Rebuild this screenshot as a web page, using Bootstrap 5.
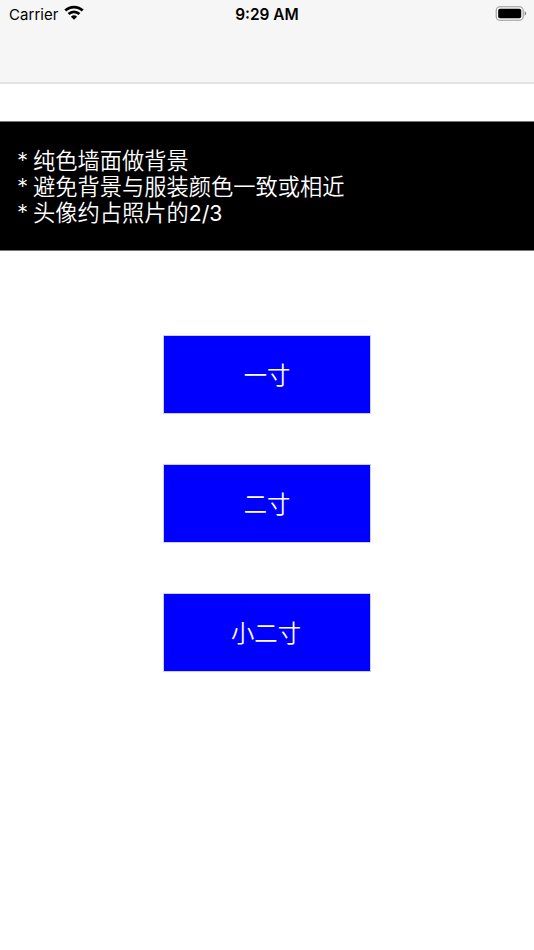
<!DOCTYPE html>
<html lang="zh-CN">
<head>
<meta charset="utf-8">
<meta name="viewport" content="width=device-width, initial-scale=1">
<title>证件照</title>
<link href="https://cdn.jsdelivr.net/npm/bootstrap@5.3.0/dist/css/bootstrap.min.css" rel="stylesheet">
<style>
body{font-family:Inter,"Noto Sans CJK SC",sans-serif;color:#000;height:950px;overflow:hidden}
.top-area{height:84px;background:#f6f6f6;border-bottom:2px solid #e4e4e4}
.status-row{height:28px;font-size:15px;line-height:28px;padding:0 7px 0 9px}
.status-row>div{flex:1 1 0}
.carrier{letter-spacing:.05px;padding-top:1px}
.wifi{margin-left:5px;margin-top:-3px}
.clock{font-weight:600;font-size:15.4px;padding-right:2px;padding-top:1px}
.battery{margin-top:-2px}
.tips{margin-top:37px;height:130px;background:#000;color:#fff;border-top:1px solid #777;border-bottom:1px solid #777;font-size:22.25px;line-height:26px;padding:26px 17px;font-weight:350}
.tips div{white-space:nowrap}
.star{display:inline-block;width:16px}
.digits{font-size:21.2px;font-weight:400}
.sizes{margin-top:84px;gap:50px}
.size-btn,.size-btn:hover{width:208px;height:79px;background:#00f;color:#fff;border:1px solid #ccf;border-radius:0;font-size:23.3px;font-weight:350;padding:3px 0 0}
.size-btn.wide-label{padding-right:2px}
</style>
</head>
<body class="bg-white">
<header class="top-area">
<div class="status-row d-flex align-items-center">
<div class="d-flex align-items-center"><span class="carrier">Carrier</span>
<svg class="wifi" width="20" height="15" viewBox="0 0 20 15"><path d="M10 14.8 6.9 11.7a4.5 4.5 0 0 1 6.2 0Z"/><path d="M4.6 9a7.8 7.8 0 0 1 10.8 0M1.3 5.6a12.4 12.4 0 0 1 17.4 0" fill="none" stroke="#000" stroke-width="2.8"/></svg></div>
<div class="clock text-center">9:29 AM</div>
<div class="d-flex justify-content-end"><svg class="battery" width="32" height="15" viewBox="0 0 32 15"><rect x="1.2" y=".8" width="27" height="13.4" rx="3.8" fill="none" stroke="#999" stroke-width="1.1"/><rect x="3.2" y="2.8" width="23" height="9.4" rx="1.8"/><path d="M29.6 5.3q1.6.6 1.6 2.2t-1.6 2.2z" fill="#888"/></svg></div>
</div>
</header>
<main>
<section class="tips"><div><span class="star">*</span>纯色墙面做背景</div><div><span class="star">*</span>避免背景与服装颜色一致或相近</div><div><span class="star">*</span>头像约占照片的<span class="digits">2/3</span></div></section>
<div class="sizes d-flex flex-column align-items-center">
<button class="btn size-btn" type="button">一寸</button>
<button class="btn size-btn" type="button">二寸</button>
<button class="btn size-btn wide-label" type="button">小二寸</button>
</div>
</main>
<script src="https://cdn.jsdelivr.net/npm/bootstrap@5.3.0/dist/js/bootstrap.bundle.min.js"></script>
</body>
</html>
